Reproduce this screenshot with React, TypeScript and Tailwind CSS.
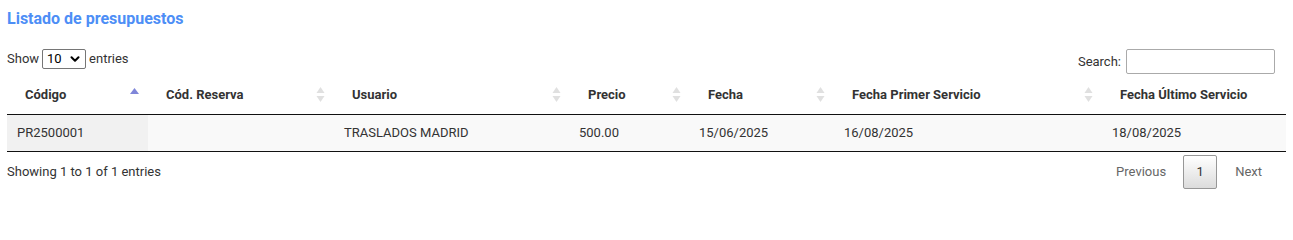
import { ChevronDown } from "lucide-react";

const COLS = [
  { label: "Código", w: "w-[141px]", sorted: true },
  { label: "Cód. Reserva", w: "w-[186px]" },
  { label: "Usuario", w: "w-[236px]" },
  { label: "Precio", w: "w-[120px]" },
  { label: "Fecha", w: "w-[144px]" },
  { label: "Fecha Primer Servicio", w: "w-[268px]" },
  { label: "Fecha Último Servicio", w: "w-[184px]", noSort: true },
];

const ROWS = [
  ["PR2500001", "", "TRASLADOS MADRID", "500.00", "15/06/2025", "16/08/2025", "18/08/2025"],
];

function SortIcon({ active }: { active?: boolean }) {
  if (active) {
    return (
      <svg width="9" height="6" viewBox="0 0 9 6" className="absolute right-[9px] top-[12px]">
        <polygon points="4.5,0 9,6 0,6" fill="#7f86d9" />
      </svg>
    );
  }
  return (
    <svg width="9" height="16" viewBox="0 0 9 16" className="absolute right-[9px] top-[11px]">
      <polygon points="4.5,0 8.5,6 0.5,6" fill="#e0e0e0" />
      <polygon points="0.5,9 8.5,9 4.5,15" fill="#e0e0e0" />
    </svg>
  );
}

export default function App() {
  return (
    <div className="px-[7px] pt-[9px] font-['Roboto',sans-serif] text-[13px] text-[#333]">
      <h2 className="text-[16px] font-bold leading-[20px] text-[#4d8ef6]">Listado de presupuestos</h2>

      <div className="mt-[20px] flex items-start justify-between">
        <label className="flex items-center gap-[3px] leading-[20px]">
          Show
          <span className="relative inline-flex h-[20px] w-[44px] items-center rounded-[2px] border border-[#767676] bg-white pl-[4px] text-[13px] text-black">
            10
            <ChevronDown className="absolute right-[3px] h-[14px] w-[14px]" strokeWidth={3.5} />
          </span>
          entries
        </label>
        <label className="mr-[11px] flex items-center gap-[5px]">
          Search:
          <input className="h-[25px] w-[149px] rounded-[2px] border border-[#aaa] bg-transparent outline-none" />
        </label>
      </div>

      <table className="mt-[2px] w-full table-fixed border-collapse">
        <thead>
          <tr className="border-b border-[#111]">
            {COLS.map((c) => (
              <th
                key={c.label}
                className={`${c.w} relative py-[10px] pl-[18px] pr-[18px] text-left font-bold leading-[18px] text-[#333]`}
              >
                {c.label}
                {!c.noSort && <SortIcon active={c.sorted} />}
              </th>
            ))}
          </tr>
        </thead>
        <tbody>
          {ROWS.map((r, i) => (
            <tr key={i} className="border-b border-[#111] bg-[#f9f9f9]">
              {r.map((v, j) => (
                <td
                  key={j}
                  className={`px-[10px] py-[9px] leading-[18px] ${j === 0 ? "bg-[#f1f1f1]" : ""} ${
                    j === 3 || j === 4 ? "pl-[9px]" : ""
                  }`}
                >
                  {v}
                </td>
              ))}
            </tr>
          ))}
        </tbody>
      </table>

      <div className="flex items-start justify-between">
        <div className="pt-[11px] leading-[18px]">Showing 1 to 1 of 1 entries</div>
        <div className="mr-[15px] mt-[2px] flex items-center">
          <span className="px-[8px] py-[8px] text-[#666]">Previous</span>
          <span className="ml-[9px] flex h-[34px] w-[34px] items-center justify-center rounded-[2px] border border-[#979797] bg-gradient-to-b from-white to-[#dcdcdc] text-[#333]">
            1
          </span>
          <span className="ml-[9px] px-[9px] py-[8px] text-[#666]">Next</span>
        </div>
      </div>
    </div>
  );
}
